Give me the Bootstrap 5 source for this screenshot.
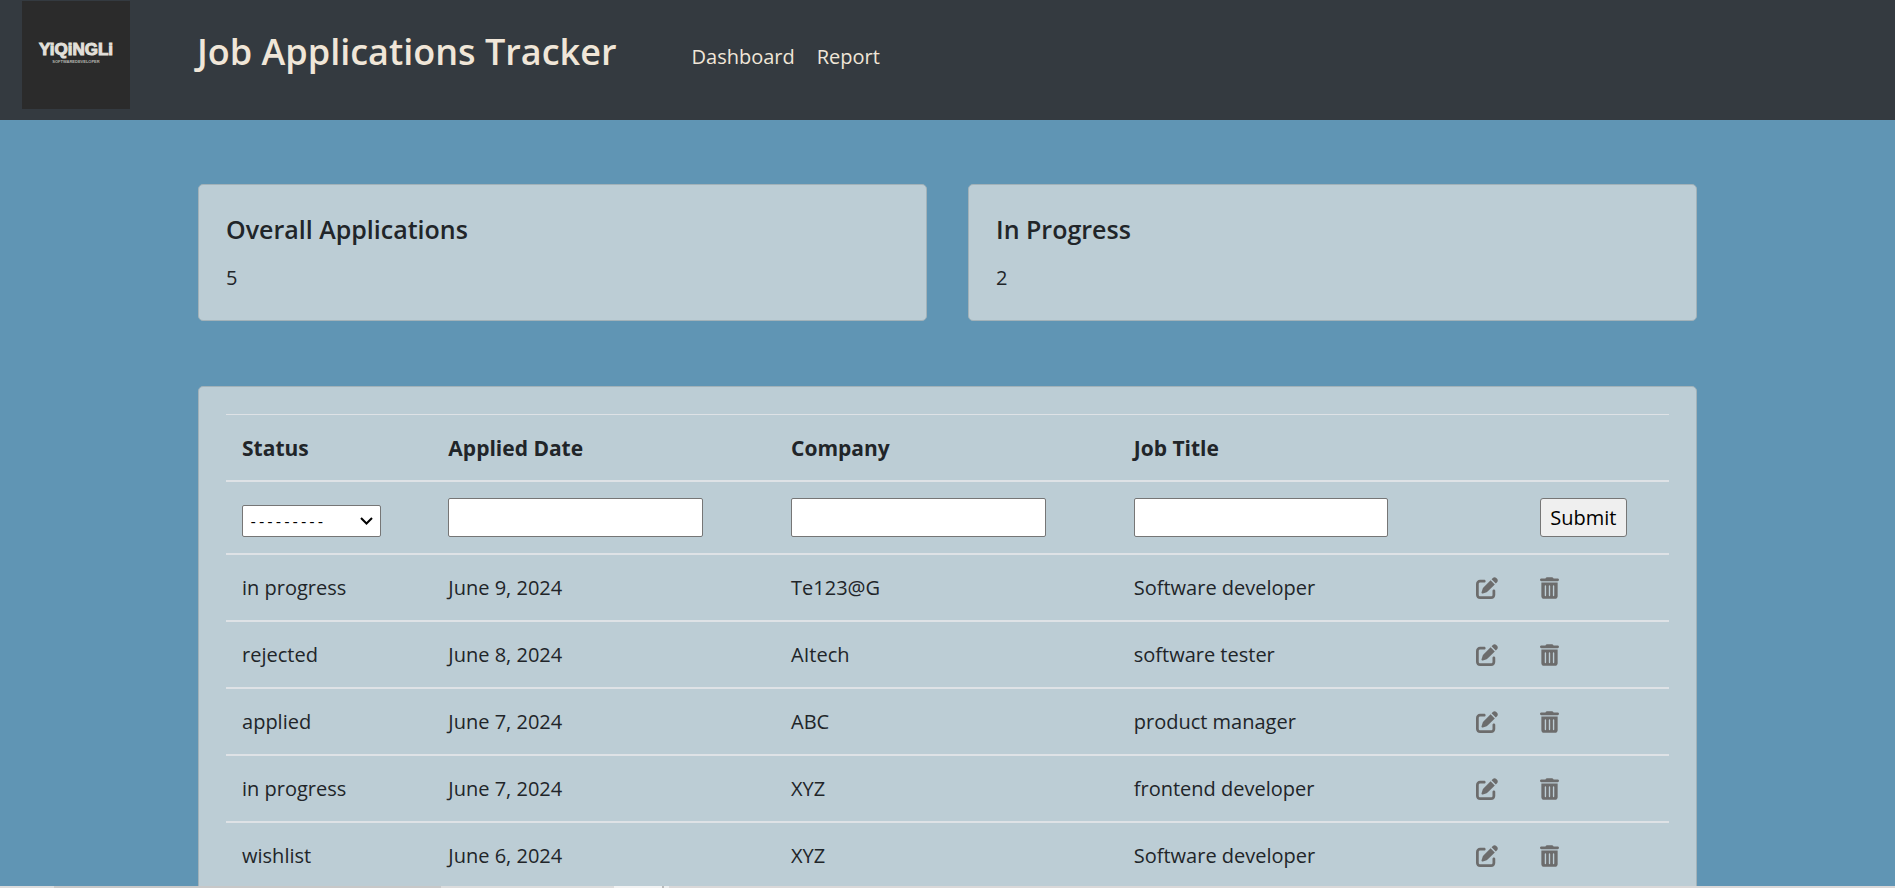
<!DOCTYPE html>
<html lang="en">
<head>
<meta charset="utf-8">
<meta name="viewport" content="width=device-width, initial-scale=1">
<title>Job Applications Tracker</title>
<link rel="stylesheet" href="https://cdn.jsdelivr.net/npm/bootstrap@5.3.0/dist/css/bootstrap.min.css">
<style>
  body { font-family: "Open Sans", "Noto Sans", sans-serif; font-size: 20px; line-height: 32px; background: #6095b4; color: #212529; }
  .site-header { background: #343a40; height: 120px; padding: 1px 22px; }
  .site-logo { width: 108px; height: 108px; display: block; }
  .logo-name { font: bold 17px "Liberation Sans", sans-serif; fill: #e2e0da; stroke: #e2e0da; stroke-width: 1; }
  .logo-role { font: bold 4px "Liberation Sans", sans-serif; fill: #b5b4b0; }
  .site-title { font-size: 36px; line-height: 48px; font-weight: 600; color: #f0e6d8; margin: 27px 75px 0 67px; }
  .site-header .nav-link { font-size: 20px; color: #f0e6d8; padding: 0; }
  .site-links { gap: 22px; margin-top: 40px; }
  .page-wrap { width: 79.1%; margin: 64px auto 0; }
  .panel { background: #bccdd5; border: 1px solid #a2b2b9; border-radius: 5px; }
  .stat-panel { padding: 27px 27px 26px; }
  .stat-panel h2 { font-size: 25px; line-height: 34px; font-weight: 600; margin-bottom: 16px; }
  .stat-row { gap: 41px; margin-bottom: 65px; }
  .table-panel { padding: 27px; }
  .jobs { width: 100%; table-layout: fixed; border-top: 1px solid #dee2e6; border-collapse: separate; border-spacing: 0; }
  .col-status { width: 14.3%; }
  .col-wide { width: 23.75%; }
  .col-edit { width: 4.4%; }
  .jobs th, .jobs td { padding: 16px; border-bottom: 2px solid #dee2e6; line-height: 33px; white-space: nowrap; vertical-align: middle; }
  .jobs th { font-size: 21px; padding: 17px 16px 15px; }
  .jobs .filter-row td { vertical-align: bottom; }
  .filter-row input, .filter-row select { border: 1px solid #767676; border-radius: 2px; background-color: #fff; color: #000; display: block; }
  .filter-row input { width: 82%; height: 39px; padding: 2px; }
  .filter-row select { width: 80%; height: 32px; padding: 4px 6px 0; font: 14px "Liberation Mono", monospace; appearance: none; background-repeat: no-repeat; background-position: right 7px center; background-size: 13px 8px;
    background-image: url("data:image/svg+xml,%3Csvg xmlns='http://www.w3.org/2000/svg' viewBox='0 0 13 8'%3E%3Cpath d='M1 1l5.500 5.500L12 1' fill='none' stroke='%23000' stroke-width='2'/%3E%3C/svg%3E"); }
  .filter-row button { display: block; height: 39px; width: 87px; padding: 0; border: 1px solid #767676; border-radius: 3px; background: #efefef; color: #000; line-height: 37px; }
  .jobs a { color: #6c6c6c; display: block; }
  .jobs svg { display: block; height: 22px; fill: currentColor; }
  .bottom-strip { height: 2px; background: linear-gradient(90deg, #dcdcdc 54px, #c8c8c8 54px 441px, #dcdcdc 441px 614px, #f2f2f2 614px 662px, #bbb 662px 664px, #eee 664px 669px, #dad8d8 669px); }
</style>
</head>
<body>
<svg class="d-none" aria-hidden="true">
  <symbol id="pen" viewBox="0 0 512 512"><path d="M471.6 21.7c-21.9-21.9-57.3-21.9-79.2 0L362.3 51.7l97.9 97.9 30.1-30.1c21.9-21.9 21.9-57.3 0-79.2L471.6 21.7zm-299.2 220c-6.1 6.1-10.8 13.6-13.5 21.9l-29.6 88.8c-2.9 8.6-.6 18.1 5.8 24.6s15.9 8.7 24.6 5.8l88.8-29.6c8.2-2.7 15.7-7.4 21.9-13.5L437.7 172.3 339.7 74.3 172.4 241.7zM96 64C43 64 0 107 0 160V416c0 53 43 96 96 96H352c53 0 96-43 96-96V320c0-17.700-14.300-32-32-32s-32 14.300-32 32v96c0 17.700-14.300 32-32 32H96c-17.700 0-32-14.300-32-32V160c0-17.700 14.300-32 32-32h96c17.700 0 32-14.300 32-32s-14.300-32-32-32H96z"/></symbol>
  <symbol id="trash" viewBox="0 0 448 512"><path d="M135.200 17.700C140.600 6.800 151.700 0 163.800 0H284.200c12.100 0 23.200 6.800 28.600 17.700L320 32h96c17.700 0 32 14.300 32 32s-14.300 32-32 32H32C14.300 96 0 81.700 0 64S14.300 32 32 32h96l7.200-14.300zM32 128H416V448c0 35.300-28.700 64-64 64H96c-35.300 0-64-28.700-64-64V128zm96 64c-8.800 0-16 7.200-16 16V432c0 8.800 7.200 16 16 16s16-7.200 16-16V208c0-8.800-7.200-16-16-16zm96 0c-8.800 0-16 7.200-16 16V432c0 8.800 7.200 16 16 16s16-7.200 16-16V208c0-8.800-7.200-16-16-16zm96 0c-8.800 0-16 7.200-16 16V432c0 8.800 7.200 16 16 16s16-7.200 16-16V208c0-8.800-7.200-16-16-16z"/></symbol>
</svg>
<header class="site-header d-flex align-items-start">
  <a href="#" aria-label="Home"><svg class="site-logo" viewBox="0 0 108 108"><rect width="108" height="108" fill="#2b2b2b"/><text class="logo-name" x="54" y="54" text-anchor="middle">YiQiNGLi</text><text class="logo-role" x="54" y="62" text-anchor="middle">SOFTWAREDEVELOPER</text></svg></a>
  <h1 class="site-title">Job Applications Tracker</h1>
  <nav class="site-links d-flex"><a class="nav-link" href="#">Dashboard</a><a class="nav-link" href="#">Report</a></nav>
</header>
<main class="page-wrap">
  <div class="stat-row d-flex">
    <section class="panel stat-panel flex-fill w-50"><h2>Overall Applications</h2><p class="mb-0">5</p></section>
    <section class="panel stat-panel flex-fill w-50"><h2>In Progress</h2><p class="mb-0">2</p></section>
  </div>
  <section class="panel table-panel">
    <form>
    <table class="jobs">
      <colgroup><col class="col-status"><col class="col-wide"><col class="col-wide"><col class="col-wide"><col class="col-edit"><col></colgroup>
      <thead><tr><th>Status</th><th>Applied Date</th><th>Company</th><th>Job Title</th><th></th><th></th></tr></thead>
      <tbody>
        <tr class="filter-row">
          <td><select aria-label="Status"><option>---------</option></select></td>
          <td><input type="text" aria-label="Applied Date"></td>
          <td><input type="text" aria-label="Company"></td>
          <td><input type="text" aria-label="Job Title"></td>
          <td></td>
          <td><button type="submit">Submit</button></td>
        </tr>
        <tr><td>in progress</td><td>June 9, 2024</td><td>Te123@G</td><td>Software developer</td><td><a href="#" aria-label="Edit"><svg width="22"><use href="#pen"/></svg></a></td><td><a href="#" aria-label="Delete"><svg width="19"><use href="#trash"/></svg></a></td></tr>
        <tr><td>rejected</td><td>June 8, 2024</td><td>AItech</td><td>software tester</td><td><a href="#" aria-label="Edit"><svg width="22"><use href="#pen"/></svg></a></td><td><a href="#" aria-label="Delete"><svg width="19"><use href="#trash"/></svg></a></td></tr>
        <tr><td>applied</td><td>June 7, 2024</td><td>ABC</td><td>product manager</td><td><a href="#" aria-label="Edit"><svg width="22"><use href="#pen"/></svg></a></td><td><a href="#" aria-label="Delete"><svg width="19"><use href="#trash"/></svg></a></td></tr>
        <tr><td>in progress</td><td>June 7, 2024</td><td>XYZ</td><td>frontend developer</td><td><a href="#" aria-label="Edit"><svg width="22"><use href="#pen"/></svg></a></td><td><a href="#" aria-label="Delete"><svg width="19"><use href="#trash"/></svg></a></td></tr>
        <tr><td>wishlist</td><td>June 6, 2024</td><td>XYZ</td><td>Software developer</td><td><a href="#" aria-label="Edit"><svg width="22"><use href="#pen"/></svg></a></td><td><a href="#" aria-label="Delete"><svg width="19"><use href="#trash"/></svg></a></td></tr>
      </tbody>
    </table>
    </form>
  </section>
</main>
<div class="bottom-strip fixed-bottom"></div>
<script src="https://cdn.jsdelivr.net/npm/bootstrap@5.3.0/dist/js/bootstrap.bundle.min.js"></script>
</body>
</html>
